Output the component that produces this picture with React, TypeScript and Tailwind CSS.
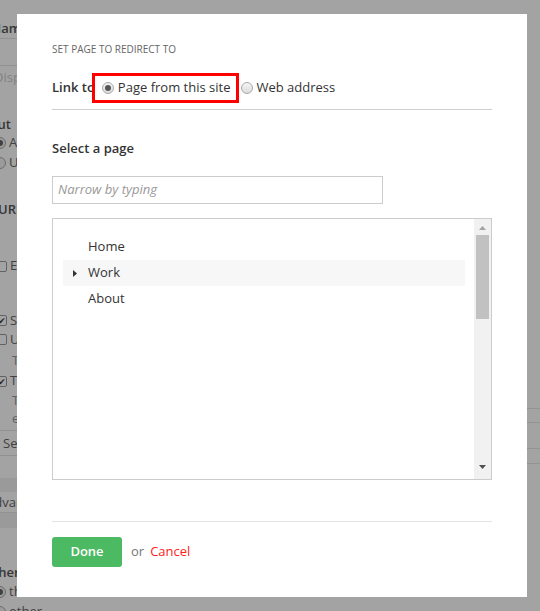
import React from "react";

const font = { fontFamily: '"Open Sans", "Noto Sans", Arial, sans-serif' };

function Radio({ checked }: { checked?: boolean }) {
  return (
    <span className="flex h-[12px] w-[12px] shrink-0 items-center justify-center rounded-full border border-[#a9a9a9] bg-gradient-to-b from-[#f4f4f4] to-[#dcdcdc]">
      {checked && <span className="h-[6px] w-[6px] rounded-full bg-[#555]" />}
    </span>
  );
}

function BgCheck({ checked }: { checked?: boolean }) {
  return (
    <span className="flex h-[11px] w-[11px] shrink-0 items-center justify-center rounded-[2px] border border-[#999] bg-white text-[9px] leading-none text-[#444]">
      {checked ? "✔" : ""}
    </span>
  );
}

function BgRadio({ checked }: { checked?: boolean }) {
  return (
    <span className="flex h-[12px] w-[12px] shrink-0 items-center justify-center rounded-full border border-[#aaa] bg-[#f2f2f2]">
      {checked && <span className="h-[6px] w-[6px] rounded-full bg-[#666]" />}
    </span>
  );
}

// The settings page sitting behind the dialog
function SettingsPage() {
  return (
    <div className="flex h-[611px] w-[540px] overflow-hidden bg-white text-[13px] text-[#666]" style={font}>
      <div className="w-[200px] shrink-0">
        <div className="h-[19px]" />
        <div className="ml-[-9px] h-[18px] leading-[18px] font-semibold text-[#555]">Name</div>
        <div className="mt-[1px] h-[1px] bg-[#e3e3e3]" />
        <div className="h-[26px]" />
        <div className="h-[1px] bg-[#e3e3e3]" />
        <div className="ml-[-6px] mt-[2px] h-[18px] leading-[18px] text-[#ccc]">Display name</div>
        <div className="h-[29px]" />
        <div className="ml-[-32px] h-[18px] leading-[18px] font-semibold text-[#555]">Layout</div>
        <div className="ml-[-6px] flex h-[20px] items-center gap-[3px]"><BgRadio checked /><span>Auto</span></div>
        <div className="ml-[-6px] flex h-[20px] items-center gap-[3px]"><BgRadio /><span>User</span></div>
        <div className="h-[27px]" />
        <div className="ml-[-2px] h-[18px] leading-[18px] font-semibold text-[#555]">URL</div>
        <div className="h-[39px]" />
        <div className="ml-[-4px] flex h-[18px] items-center gap-[3px]"><BgCheck /><span>Enable</span></div>
        <div className="h-[36px]" />
        <div className="ml-[-4px] flex h-[19px] items-center gap-[3px]"><BgCheck checked /><span>Show</span></div>
        <div className="ml-[-4px] flex h-[19px] items-center gap-[3px]"><BgCheck /><span>Use</span></div>
        <div className="ml-[12px] h-[22px] leading-[22px] text-[#999]">The</div>
        <div className="ml-[-4px] flex h-[20px] items-center gap-[3px]"><BgCheck checked /><span>This</span></div>
        <div className="ml-[12px] h-[19px] leading-[19px] text-[#999]">The</div>
        <div className="ml-[12px] h-[16px] leading-[16px] text-[#999]">e</div>
        <div className="mt-[4px] h-[1px] bg-[#e3e3e3]" />
        <div className="ml-[3px] h-[24px] leading-[24px]">Se</div>
        <div className="h-[1px] bg-[#e3e3e3]" />
        <div className="h-[22px]" />
        <div className="h-[14px] bg-[#f1f1f1]" />
        <div className="ml-[-14px] h-[20px] leading-[20px]">Advanced</div>
        <div className="h-[1px] bg-[#e3e3e3]" />
        <div className="h-[15px] bg-[#f1f1f1]" />
        <div className="h-[34px]" />
        <div className="ml-[-14px] h-[20px] leading-[20px] font-semibold text-[#555]">Where</div>
        <div className="ml-[-6px] flex h-[20px] items-center gap-[3px]"><BgRadio checked /><span>this</span></div>
        <div className="ml-[-6px] flex h-[20px] items-center gap-[3px]"><BgRadio /><span>other</span></div>
      </div>
      <div className="flex-1">
        <div className="h-[408px]" />
        <div className="h-[1px] bg-[#e6e6e6]" />
        <div className="h-[13px]" />
        <div className="h-[1px] bg-[#e6e6e6]" />
        <div className="h-[25px]" />
        <div className="h-[1px] bg-[#e6e6e6]" />
        <div className="h-[14px]" />
        <div className="h-[1px] bg-[#e6e6e6]" />
      </div>
    </div>
  );
}

function Caret({ dir, color }: { dir: "up" | "down" | "right"; color: string }) {
  if (dir === "right") {
    return (
      <svg width="4" height="7" viewBox="0 0 4 7"><path d="M0 0 L4 3.5 L0 7 Z" fill={color} /></svg>
    );
  }
  return (
    <svg width="7" height="4" viewBox="0 0 7 4">
      {dir === "up" ? <path d="M0 4 L3.5 0 L7 4 Z" fill={color} /> : <path d="M0 0 L7 0 L3.5 4 Z" fill={color} />}
    </svg>
  );
}

const pages = [
  { name: "Home", children: false, hover: false },
  { name: "Work", children: true, hover: true },
  { name: "About", children: false, hover: false },
];

function RedirectDialog() {
  return (
    <div className="absolute left-[17px] top-[14px] flex h-[583px] w-[510px] flex-col bg-white px-[35px] pt-[28px]" style={font}>
      <div className="h-[14px] text-[10px] leading-[14px] uppercase text-[#666]">Set page to redirect to</div>

      <div className="mt-[17px] flex h-[30px] items-center text-[13px] text-[#333]">
        <span className="font-semibold">Link to</span>
        <label className="ml-[-3px] flex h-[30px] items-center gap-[4px] border-[3px] border-[#f00] pl-[7px] pr-[6px]">
          <Radio checked />
          <span>Page from this site</span>
        </label>
        <label className="ml-[2px] flex items-center gap-[3px]">
          <Radio />
          <span>Web address</span>
        </label>
      </div>

      <div className="mt-[6px] h-[1px] bg-[#cfcfcf]" />

      <div className="mt-[29px] h-[18px] text-[13px] font-semibold leading-[18px] text-[#333]">Select a page</div>

      <div className="mt-[19px] flex h-[28px] w-[331px] items-center border border-[#ccc] pl-[5px] text-[13px] italic text-[#999]">
        Narrow by typing
      </div>

      <div className="mt-[14px] flex h-[262px] border border-[#ccc]">
        <ul className="flex flex-1 flex-col pl-[10px] pr-[9px] pt-[15px] text-[13px] text-[#333]">
          {pages.map((p) => (
            <li key={p.name} className={`flex h-[26px] items-center ${p.hover ? "bg-[#f7f7f7]" : ""}`}>
              <span className="flex w-[25px] justify-center pr-[2px]">
                {p.children && <Caret dir="right" color="#333" />}
              </span>
              <span>{p.name}</span>
            </li>
          ))}
        </ul>
        <div className="flex w-[17px] flex-col items-center bg-[#f1f1f1]">
          <div className="flex h-[16px] items-center justify-center pt-[2px]">
            <Caret dir="up" color="#a3a3a3" />
          </div>
          <div className="h-[84px] w-[13px] bg-[#c1c1c1]" />
          <div className="flex-1" />
          <div className="flex h-[18px] items-start justify-center pt-[4px]">
            <Caret dir="down" color="#505050" />
          </div>
        </div>
      </div>

      <div className="mt-[41px] h-[1px] bg-[#e3e3e3]" />

      <div className="mt-[15px] flex items-center text-[13px]">
        <button className="flex h-[30px] w-[70px] items-center justify-center rounded-[3px] bg-[#4cb963] font-semibold text-white">
          Done
        </button>
        <span className="ml-[9px] text-[#777]">or</span>
        <span className="ml-[6px] text-[#f22]">Cancel</span>
      </div>
    </div>
  );
}

export default function App() {
  return (
    <div className="relative h-[611px] w-[540px] overflow-hidden">
      <SettingsPage />
      <div className="absolute inset-0 bg-black/[0.36]" />
      <RedirectDialog />
    </div>
  );
}
